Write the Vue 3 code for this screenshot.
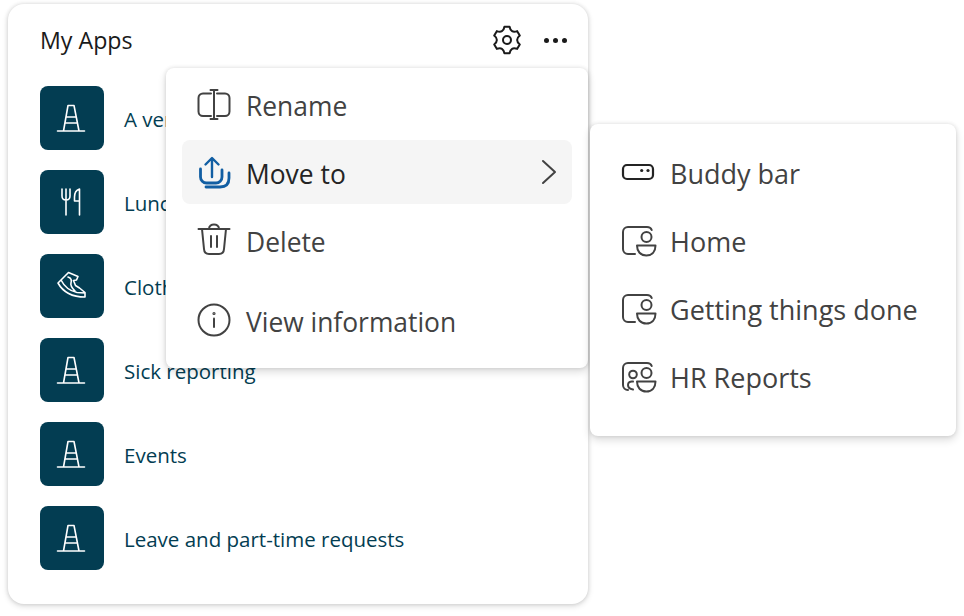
<template>
    <div class="page">
        <div class="card">
            <div class="card-head">
                <span class="title">My Apps</span>
                <div class="head-actions">
                    <svg class="gear" width="30" height="30" viewBox="0 0 30 30" fill="none" stroke="#1a1a1a" stroke-width="2" stroke-linejoin="round">
                        <path :d="gearPath" />
                        <circle cx="15" cy="15" r="4" />
                    </svg>
                    <div class="dots"><i></i><i></i><i></i></div>
                </div>
            </div>
            <ul class="apps">
                <li v-for="app in apps" :key="app.name" class="app">
                    <div class="tile">
                        <svg width="64" height="64" viewBox="0 0 64 64" fill="none" stroke="#fff" stroke-width="1.6" stroke-linecap="round" stroke-linejoin="round">
                            <template v-if="app.icon === 'cone'">
                                <path d="M17.500 45h27M23.500 45 28 19.500h6L39 45M26.500 31h9M25.500 37h11" />
                            </template>
                            <template v-else-if="app.icon === 'food'">
                                <path d="M22 19v7c0 3 1.500 4 4 4s4-1 4-4v-7M26 19v26M39.500 19v26M39.500 19c-3 1-5 4-5 8v4h5" />
                            </template>
                            <template v-else>
                                <path d="M18 29 28.500 18.500 38 22.500l-1.500 3.500-3 .5 2 5 4 2.500 5.500 4.500V43C33 43 23 38 18 29ZM21 26c3 6 9 11 16 12.500l8 .5M28 23c3 1 4 3 3 6s2 6 4 8" />
                            </template>
                        </svg>
                    </div>
                    <span class="app-name">{{ app.name }}</span>
                </li>
            </ul>
        </div>

        <div class="menu main-menu">
            <div v-for="item in menuItems" :key="item.label" class="menu-row" :class="{ active: item.active, spaced: item.spaced }">
                <svg width="36" height="36" viewBox="0 0 36 36" fill="none" :stroke="item.active ? '#115ea3' : '#424242'" stroke-width="2" stroke-linecap="round" stroke-linejoin="round">
                    <template v-if="item.icon === 'rename'">
                        <path d="M15 7.500H7a4.500 4.500 0 0 0-4.500 4.500v13.500A4.500 4.500 0 0 0 7 30h8M21 7.500h8a4.500 4.500 0 0 1 4.500 4.500v13.500A4.500 4.500 0 0 1 29 30h-8M18 4v29M14.500 4h7M14.500 33h7" />
                    </template>
                    <template v-else-if="item.icon === 'move'">
                        <path d="M16 23V4.500M9.500 10.500 16 4l6.500 6.500" stroke-width="2.400" />
                        <path d="M4.500 15v8a6 6 0 0 0 6 6H20a6 6 0 0 0 6-6v-7" stroke-width="2.800" />
                        <path d="M33 19v5c0 5.500-3 9-9 9H10" stroke-width="2.800" />
                    </template>
                    <template v-else-if="item.icon === 'delete'">
                        <path d="M2.500 7h31M13 7c0-6 10-6 10 0M6 7l2 20c.2 3 2 5 5 5h10c3 0 4.800-2 5-5l2-20M15 14v11M21 14v11" />
                    </template>
                    <template v-else>
                        <circle cx="18" cy="18" r="15.500" />
                        <path d="M18 16.500V25" />
                        <circle cx="18" cy="11.500" r=".6" />
                    </template>
                </svg>
                <span class="menu-label">{{ item.label }}</span>
                <svg v-if="item.active" class="chevron" width="16" height="26" viewBox="0 0 16 26" fill="none" stroke="#424242" stroke-width="2" stroke-linecap="round" stroke-linejoin="round">
                    <path d="m2 2 12 11L2 24" />
                </svg>
            </div>
        </div>

        <div class="menu sub-menu">
            <div v-for="item in moveTargets" :key="item.label" class="menu-row">
                <svg width="34" height="34" viewBox="0 0 34 34" fill="none" stroke="#424242" stroke-width="2" stroke-linecap="round" stroke-linejoin="round">
                    <template v-if="item.icon === 'bar'">
                        <rect x="2" y="10" width="30" height="14" rx="4" stroke="#242424" stroke-width="2.200" />
                        <circle cx="20.700" cy="15.500" r="1.600" fill="#242424" stroke="none" />
                        <circle cx="27" cy="15.500" r="1.600" fill="#242424" stroke="none" />
                    </template>
                    <template v-else-if="item.icon === 'person'">
                        <path d="M14 31H7a5 5 0 0 1-5-5V9a5 5 0 0 1 5-5h19c2.500 0 4 1 4.700 3" />
                        <circle cx="25.500" cy="14" r="5" />
                        <path d="M16 22.500h18.500c0 6-3.500 10-9.200 10s-9.300-4-9.300-10Z" />
                    </template>
                    <template v-else>
                        <path d="M7 31a5 5 0 0 1-5-5V9a5 5 0 0 1 5-5h19c2.500 0 4 1 4.700 3" />
                        <circle cx="25.500" cy="14" r="5" />
                        <circle cx="12" cy="15.500" r="3.800" />
                        <path d="M16 22.500h18.500c0 6-3.500 10-9.200 10s-9.300-4-9.300-10ZM12 22.500c-3-.5-5 1-5 3.500 0 2 1.500 4 5 4.500" />
                    </template>
                </svg>
                <span class="menu-label">{{ item.label }}</span>
            </div>
        </div>
    </div>
</template>

<script setup>
const apps = [
    { name: "A very long app name", icon: "cone" },
    { name: "Lunch", icon: "food" },
    { name: "Clothing", icon: "shoe" },
    { name: "Sick reporting", icon: "cone" },
    { name: "Events", icon: "cone" },
    { name: "Leave and part-time requests", icon: "cone" },
];

const menuItems = [
    { label: "Rename", icon: "rename" },
    { label: "Move to", icon: "move", active: true },
    { label: "Delete", icon: "delete" },
    { label: "View information", icon: "info", spaced: true },
];

const moveTargets = [
    { label: "Buddy bar", icon: "bar" },
    { label: "Home", icon: "person" },
    { label: "Getting things done", icon: "person" },
    { label: "HR Reports", icon: "group" },
];

// six lobes with deep notches, same shape as the settings glyph
function polar(r, deg) {
    const a = (deg * Math.PI) / 180;
    return `${(15 + r * Math.cos(a)).toFixed(2)} ${(15 + r * Math.sin(a)).toFixed(2)}`;
}
const gearPath = (() => {
    let d = "";
    for (let i = 0; i < 6; i++) {
        const c = -90 + i * 60;
        d += `${i ? "L" : "M"}${polar(13.5, c - 11)} L${polar(13.5, c + 11)} `;
        d += `Q${polar(7.5, c + 30)} ${polar(13.5, c + 49)} `;
    }
    return d + "Z";
})();
</script>

<style>
html,
body {
    margin: 0;
    background: #fff;
}
</style>

<style scoped>
.page {
    position: relative;
    width: 964px;
    height: 616px;
    overflow: hidden;
    padding: 4px 0 0 8px;
    box-sizing: border-box;
    background: #fff;
    font-family: "Open Sans", "Noto Sans", sans-serif;
}
.card {
    width: 580px;
    height: 600px;
    box-sizing: border-box;
    padding: 0 32px;
    background: #fff;
    border-radius: 16px;
    box-shadow: 0 0 4px rgba(0, 0, 0, 0.12), 0 2px 6px rgba(0, 0, 0, 0.14);
}
.card-head {
    height: 72px;
    display: flex;
    align-items: center;
    justify-content: space-between;
}
.title {
    font-size: 23.2px;
    color: #1a1a1a;
}
.head-actions {
    display: flex;
    align-items: center;
    gap: 22px;
    margin-right: -11px;
}
.gear {
    display: block;
    overflow: visible;
}
.dots {
    display: flex;
    gap: 4px;
}
.dots i {
    width: 5px;
    height: 5px;
    border-radius: 50%;
    background: #1a1a1a;
}
.apps {
    list-style: none;
    margin: 10px 0 0;
    padding: 0;
    display: flex;
    flex-direction: column;
    gap: 20px;
}
.app {
    display: flex;
    align-items: center;
    gap: 20px;
    height: 64px;
}
.tile {
    width: 64px;
    height: 64px;
    flex: none;
    border-radius: 8px;
    background: #033d52;
}
.tile svg {
    display: block;
}
.app-name {
    font-size: 20.5px;
    color: #033d52;
    padding-top: 2px;
}
.menu {
    position: absolute;
    box-sizing: border-box;
    background: #fff;
    border-radius: 8px;
    box-shadow: 0 0 4px rgba(0, 0, 0, 0.12), 0 4px 8px rgba(0, 0, 0, 0.14);
    display: flex;
    flex-direction: column;
    gap: 4px;
}
.main-menu {
    left: 166px;
    top: 68px;
    width: 422px;
    height: 300px;
    padding: 4px 16px 16px;
}
.sub-menu {
    left: 590px;
    top: 124px;
    width: 366px;
    height: 312px;
    padding: 16px;
}
.menu-row {
    height: 64px;
    flex: none;
    display: flex;
    align-items: center;
    gap: 14px;
    padding: 0 14px;
    border-radius: 8px;
}
.menu-row svg {
    flex: none;
    overflow: visible;
}
.sub-menu .menu-row {
    gap: 15px;
    padding: 0 15px;
}
.menu-row.active {
    background: #f5f5f5;
}
.menu-row.spaced {
    margin-top: 12px;
}
.menu-label {
    font-size: 26.4px;
    color: #424242;
    padding-top: 4px;
}
.sub-menu .menu-label {
    font-size: 27px;
    padding-top: 2px;
}
.active .menu-label {
    color: #242424;
}
.chevron {
    margin-left: auto;
    margin-right: 1px;
}
</style>
